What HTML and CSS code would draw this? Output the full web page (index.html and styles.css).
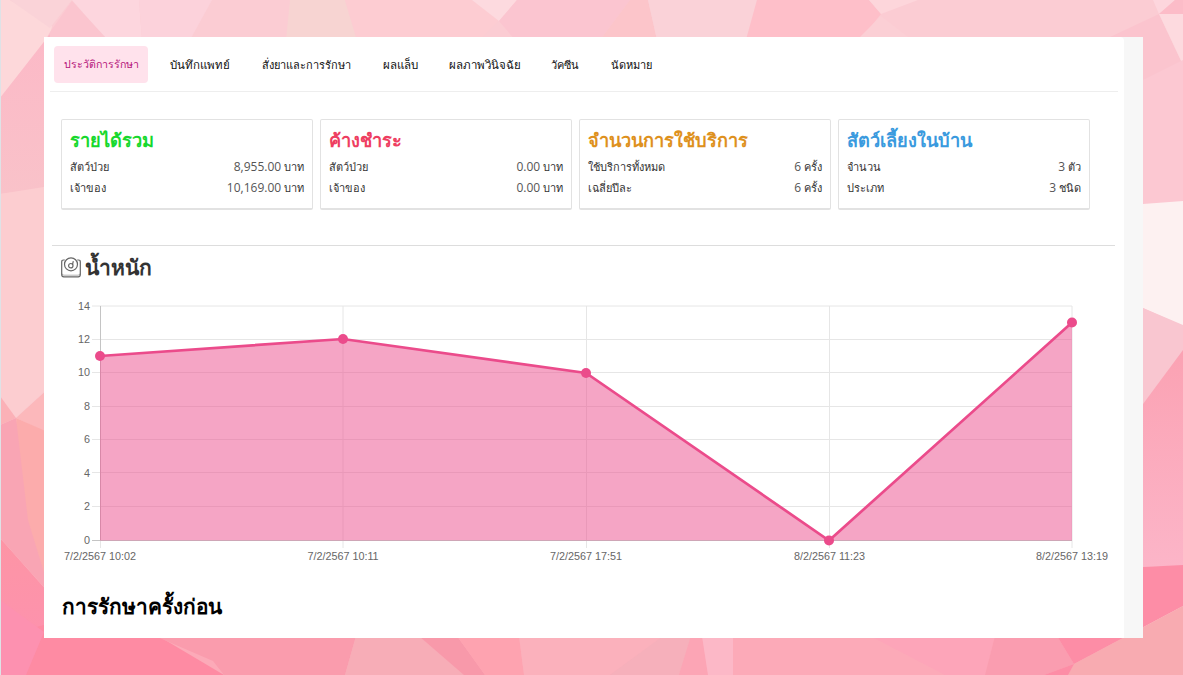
FILE: index.html
```html
<!DOCTYPE html>
<html lang="th">
<head>
    <meta charset="UTF-8">
    <meta name="viewport" content="width=device-width, initial-scale=1.0">
    <title>ประวัติการรักษา</title>
    <link rel="stylesheet" href="styles.css">
</head>
<body>
    <svg class="backdrop" viewBox="0 0 1183 675" preserveAspectRatio="none" aria-hidden="true">
        <defs>
            <linearGradient id="bg-left" x1="0" y1="0" x2="0" y2="1">
                <stop offset="0" stop-color="#fcb9c7"/>
                <stop offset="1" stop-color="#f9c2c9"/>
            </linearGradient>
            <linearGradient id="bg-right" x1="0" y1="0" x2="0" y2="1">
                <stop offset="0" stop-color="#fba2b3"/>
                <stop offset="1" stop-color="#fcb5c8"/>
            </linearGradient>
            <linearGradient id="bg-low" x1="0" y1="0" x2="0" y2="1">
                <stop offset="0" stop-color="#fd95a5"/>
                <stop offset="1" stop-color="#fd91b0"/>
            </linearGradient>
        </defs>
        <rect width="1183" height="675" fill="#fbccd3"/>
        <!-- top -->
        <polygon points="0,0 10,0 52,26 50,36 0,98" fill="#fdd8da"/>
        <polygon points="10,0 72,0 50,28" fill="#fad3d8"/>
        <polygon points="72,0 139,0 142,40 106,40" fill="#fdd6de"/>
        <polygon points="139,0 212,0 190,40 142,40" fill="#fcd2db"/>
        <polygon points="72,1 106,38 106,50 40,50 50,32" fill="#fbc5cf"/>
        <polygon points="290,0 345,0 357,40 286,40" fill="#f7d4d2"/>
        <polygon points="345,0 472,0 499,20 480,40 357,40" fill="#fdccd2"/>
        <polygon points="472,0 517,0 499,21" fill="#fddadf"/>
        <polygon points="517,0 630,0 600,40 515,40 499,21" fill="#fbc5d0"/>
        <polygon points="630,0 648,0 657,40 600,40" fill="#fcc5ca"/>
        <polygon points="648,0 757,0 746,40 657,40" fill="#fad2d8"/>
        <polygon points="757,0 869,0 881,14 860,40 746,40" fill="#febfc9"/>
        <polygon points="869,0 918,0 881,14" fill="#fdd6db"/>
        <polygon points="881,16 912,40 857,40" fill="#fbcfd5"/>
        <polygon points="1153,0 1175,0 1159,14" fill="#fdd6dd"/>
        <polygon points="1175,0 1183,0 1183,14 1159,14" fill="#fcbcc8"/>
        <!-- right -->
        <polygon points="1110,37 1159,14 1183,65 1143,80" fill="#fbc4ce"/>
        <polygon points="1159,14 1183,14 1183,65" fill="#fddadf"/>
        <polygon points="1143,80 1183,60 1183,202 1143,204" fill="#fcc8d2"/>
        <polygon points="1143,204 1183,201 1183,326 1143,308" fill="#fdf1f1"/>
        <polygon points="1143,308 1183,325 1183,351 1143,404" fill="#f9c6d0"/>
        <polygon points="1143,404 1183,350 1183,566 1143,567" fill="url(#bg-right)"/>
        <!-- left -->
        <polygon points="0,98 50,34 50,188 0,194" fill="url(#bg-left)"/>
        <polygon points="0,194 50,186 50,386 16,418 0,396" fill="#fccdd0"/>
        <polygon points="16,418 50,387 50,434" fill="#fcb8bb"/>
        <polygon points="0,396 16,418 0,425" fill="#fbb1b7"/>
        <polygon points="0,425 16,418 50,570 50,594 0,538" fill="#f9a5b4"/>
        <polygon points="16,418 50,433 50,592 28,520" fill="#fcacac"/>
        <polygon points="0,538 50,594 50,675 0,675" fill="url(#bg-low)"/>
        <!-- bottom -->
        <rect y="636" width="1183" height="39" fill="#fcaab8"/>
        <polygon points="0,636 44,625 160,637 224,675 0,675" fill="#fe8ba3"/>
        <polygon points="0,600 44,632 26,675 0,675" fill="#fd91b0"/>
        <polygon points="155,636 356,636 345,675 224,675 213,661" fill="#fa9cad"/>
        <polygon points="356,636 419,636 464,675 345,675" fill="#f7adb7"/>
        <polygon points="419,636 457,636 485,675 464,675" fill="#f899aa"/>
        <polygon points="457,636 519,636 524,675 485,675" fill="#fea3b0"/>
        <polygon points="519,636 665,636 610,675 524,675" fill="#fbb1bc"/>
        <polygon points="663,636 691,636 679,675 610,675" fill="#f6b0bb"/>
        <polygon points="691,636 702,636 708,675 679,675" fill="#fca5b5"/>
        <polygon points="702,636 733,636 733,675 708,675" fill="#fcb8c7"/>
        <polygon points="870,636 995,636 985,675 945,675" fill="#fda5b9"/>
        <polygon points="995,636 1057,636 1074,664 1044,675 985,675" fill="#fa9db0"/>
        <polygon points="1057,636 1143,567 1183,565 1183,606 1074,664" fill="#fd8da6"/>
        <polygon points="1183,606 1183,675 1068,675 1074,664" fill="#f8abb1"/>
        <polygon points="1044,675 1074,664 1068,675" fill="#fd8da6"/>
        <rect width="1" height="675" fill="#dee2e6"/>
    </svg>

    <div class="panel">
        <main class="content">
            <nav class="tabs">
                <a class="tab active">ประวัติการรักษา</a>
                <a class="tab wide">บันทึกแพทย์</a>
                <a class="tab">สั่งยาและการรักษา</a>
                <a class="tab wide">ผลแล็บ</a>
                <a class="tab wide">ผลภาพวินิจฉัย</a>
                <a class="tab">วัคซีน</a>
                <a class="tab">นัดหมาย</a>
            </nav>

            <section class="cards">
                <div class="card">
                    <h2 class="green">รายได้รวม</h2>
                    <div class="row"><span>สัตว์ป่วย</span><span><b>8,955.00</b> บาท</span></div>
                    <div class="row"><span>เจ้าของ</span><span><b>10,169.00</b> บาท</span></div>
                </div>
                <div class="card">
                    <h2 class="red">ค้างชำระ</h2>
                    <div class="row"><span>สัตว์ป่วย</span><span><b>0.00</b> บาท</span></div>
                    <div class="row"><span>เจ้าของ</span><span><b>0.00</b> บาท</span></div>
                </div>
                <div class="card">
                    <h2 class="orange">จำนวนการใช้บริการ</h2>
                    <div class="row"><span>ใช้บริการทั้งหมด</span><span><b>6</b> ครั้ง</span></div>
                    <div class="row"><span>เฉลี่ยปีละ</span><span><b>6</b> ครั้ง</span></div>
                </div>
                <div class="card">
                    <h2 class="blue">สัตว์เลี้ยงในบ้าน</h2>
                    <div class="row"><span>จำนวน</span><span><b>3</b> ตัว</span></div>
                    <div class="row"><span>ประเภท</span><span><b>3</b> ชนิด</span></div>
                </div>
            </section>

            <section class="weight">
                <h3 class="weight-title">
                    <svg class="scale-icon" viewBox="0 0 20 21" fill="none" stroke="#666" stroke-width="1.2">
                        <path d="M3.8 3H2.5Q.7 3 .7 5V17.5Q.7 19.8 2.8 19.8H17.2Q19.3 19.8 19.3 17.5V5Q19.3 3 17.5 3H16.2"/>
                        <path d="M.9 16.5Q1.2 18.2 3 18.2H17Q18.8 18.2 19.1 16.5" stroke-width=".5"/>
                        <circle cx="10" cy="7.3" r="6.5"/>
                        <circle cx="9.8" cy="8.7" r="2.2"/>
                        <path d="M11.5 7.6L12.3 4.2"/>
                    </svg>
                    <span>น้ำหนัก</span>
                </h3>
                <svg class="chart" width="1063" height="280" viewBox="52 290 1063 280">
                    <g class="grid">
                        <path d="M92 306H1072M92 339.5H1072M92 372.5H1072M92 406.5H1072M92 439.5H1072M92 472.5H1072M92 506.5H1072"/>
                        <path d="M343 306V548M586.5 306V548M829.5 306V548M1072 306V548M100.5 541V548"/>
                    </g>
                    <path class="axis" d="M100.5 306V541M92 540.5H1072"/>
                    <polygon class="area" points="100,356 343,339 586,373 829,540.5 1072,322.5 1072,540.5 100,540.5"/>
                    <polyline class="line" points="100,356 343,339 586,373 829,540.5 1072,322.5"/>
                    <g class="dots">
                        <circle cx="100" cy="356" r="5"/>
                        <circle cx="343" cy="339" r="5"/>
                        <circle cx="586" cy="373" r="5"/>
                        <circle cx="829" cy="540.5" r="5"/>
                        <circle cx="1072" cy="322.5" r="5"/>
                    </g>
                    <g class="labels y">
                        <text x="90" y="310">14</text>
                        <text x="90" y="343">12</text>
                        <text x="90" y="376">10</text>
                        <text x="90" y="410">8</text>
                        <text x="90" y="443">6</text>
                        <text x="90" y="477">4</text>
                        <text x="90" y="510">2</text>
                        <text x="90" y="544">0</text>
                    </g>
                    <g class="labels x">
                        <text x="100" y="560">7/2/2567 10:02</text>
                        <text x="343" y="560">7/2/2567 10:11</text>
                        <text x="586" y="560">7/2/2567 17:51</text>
                        <text x="829.5" y="560">8/2/2567 11:23</text>
                        <text x="1072" y="560">8/2/2567 13:19</text>
                    </g>
                </svg>
            </section>

            <h3 class="history-title">การรักษาครั้งก่อน</h3>
        </main>
    </div>
</body>
</html>
```
FILE: styles.css
```css
* {
    box-sizing: border-box;
}
body {
    margin: 0;
    height: 675px;
    overflow: hidden;
    padding: 37px 40px 0 44px;
    font-family: "Open Sans", "Noto Sans", sans-serif;
    font-size: 11px;
    color: #333;
}
.backdrop {
    position: absolute;
    top: 0;
    left: 0;
    width: 1183px;
    height: 675px;
    z-index: -1;
}
.panel {
    height: 601px;
    padding-right: 19px;
    background: #f7f7f7;
    overflow: hidden;
}
.content {
    height: 100%;
    background: #fff;
    border-top-right-radius: 4px;
}
.tabs {
    display: grid;
    grid-template-columns: 94px 80px 108px 56px 89px 48px 61px;
    gap: 12px;
    height: 55px;
    margin: 0 6px;
    padding: 9px 4px 0;
    border-bottom: 1px solid #eee;
}
.tab {
    height: 37px;
    border-radius: 4px;
    line-height: 37px;
    text-align: center;
    color: #111;
    white-space: nowrap;
}
.tab.wide {
    font-size: 11.5px;
}
.tab.active {
    background: #ffe2ec;
    color: #b5127a;
    font-size: 10.6px;
}
.cards {
    display: grid;
    grid-template-columns: repeat(4, 252px);
    gap: 7px;
    margin: 27px 0 0 17px;
}
.card {
    height: 91px;
    padding: 7px 8px 0;
    border: 1px solid #e2e2e2;
    border-bottom-width: 2px;
    border-radius: 2px;
}
.card h2 {
    margin: 0 0 3px;
    font-size: 18.2px;
    line-height: 26px;
    white-space: nowrap;
}
.green {
    color: #17d82d;
}
.red {
    color: #ee3e61;
}
.orange {
    color: #de911d;
}
.blue {
    color: #3a9ade;
}
.row {
    display: flex;
    justify-content: space-between;
    height: 21px;
    line-height: 21px;
    white-space: nowrap;
}
.row b {
    font-size: 12px;
    font-weight: normal;
    color: #555;
}
.weight {
    margin: 35px 9px 0 8px;
    border-top: 1px solid #ddd;
}
.weight-title {
    display: flex;
    align-items: center;
    gap: 4px;
    height: 44px;
    margin: 0;
    padding: 0 0 2px 9px;
    font-size: 21px;
}
.scale-icon {
    width: 20px;
    height: 21px;
}
.chart {
    display: block;
}
.grid,
.axis {
    fill: none;
    stroke: #e6e6e6;
}
.axis {
    stroke: #c4c4c4;
}
.area {
    fill: #eb4b8b;
    fill-opacity: 0.5;
}
.line {
    fill: none;
    stroke: #eb4b8b;
    stroke-width: 2.7;
}
.dots {
    fill: #eb4b8b;
}
.labels {
    font: 10.8px "Liberation Sans", Arial, sans-serif;
    fill: #666;
}
.labels.y {
    text-anchor: end;
}
.labels.x {
    text-anchor: middle;
}
.history-title {
    margin: 20px 0 0 18px;
    font-size: 20.8px;
    line-height: 32px;
    color: #000;
}
```
